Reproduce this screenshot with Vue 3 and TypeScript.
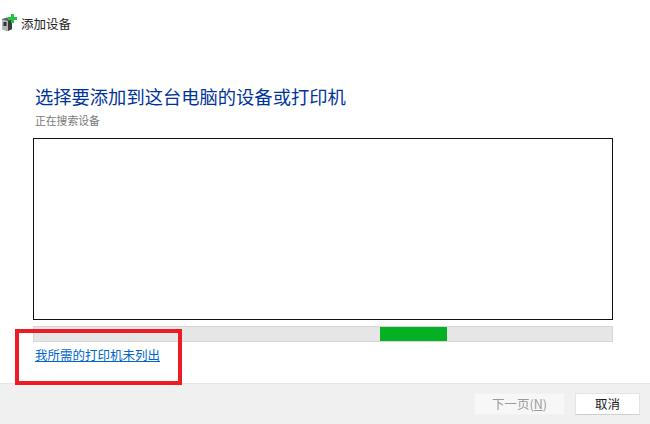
<script setup lang="ts">
const title = '选择要添加到这台电脑的设备或打印机'
</script>

<template>
  <div class="window">
    <header class="titlebar">
      <svg class="icon" width="17" height="18" viewBox="0 0 17 18">
        <path d="M1 5 L6 3.5 L11 5 V15 L6 17 L1 15Z" fill="#5f6664" />
        <path d="M1 5.5 L7 7 V17 L1 15Z" fill="#b4b9b6" />
        <path d="M7 7 L11 5.5 V15 L7 17Z" fill="#3a3f3e" />
        <rect x="2.5" y="8" width="3" height="4" fill="#2f3433" />
        <path d="M10 0 H13 V3 H16 V6 H13 V9 H10 V6 H7 V3 H10Z" fill="#1fc43c" />
      </svg>
      <span class="caption">添加设备</span>
    </header>

    <main class="content">
      <h1 class="heading">{{ title }}</h1>
      <p class="status">正在搜索设备</p>
      <div class="list"></div>
      <div class="progress"><div class="bar"></div></div>
      <a class="link" href="#">我所需的打印机未列出</a>
      <div class="highlight"></div>
    </main>

    <footer class="footer">
      <button class="btn disabled" disabled>下一页(<u>N</u>)</button>
      <button class="btn cancel">取消</button>
    </footer>
  </div>
</template>

<style scoped>
.window {
  width: 650px;
  height: 424px;
  display: flex;
  flex-direction: column;
  background: #fff;
  font-family: "Noto Sans CJK SC", "Liberation Sans", sans-serif;
  overflow: hidden;
}
.titlebar {
  height: 50px;
  display: flex;
  align-items: flex-start;
  padding: 14px 0 0 1px;
  gap: 3px;
  box-sizing: border-box;
}
.icon {
  flex: none;
}
.caption {
  font-size: 12.5px;
  line-height: 20px;
  color: #222;
}
.content {
  position: relative;
  flex: 1;
  padding: 0 37px 0 33px;
  display: flex;
  flex-direction: column;
}
.heading {
  margin: 33px 0 0 2px;
  font-size: 18.3px;
  line-height: 26px;
  font-weight: 400;
  color: #003399;
}
.status {
  margin: 3px 0 0 2px;
  font-size: 10.8px;
  line-height: 16px;
  color: #7a7a7a;
}
.list {
  margin-top: 10px;
  height: 182px;
  box-sizing: border-box;
  border: 1px solid #111;
  background: #fff;
}
.progress {
  margin-top: 6px;
  height: 16px;
  box-sizing: border-box;
  background: #e6e6e6;
  border: 1px solid #d6d6d6;
}
.bar {
  margin-left: 346px;
  width: 67px;
  height: 14px;
  background: #06b025;
}
.link {
  margin: 4px 0 0 2px;
  font-size: 12.5px;
  line-height: 18px;
  color: #0066cc;
  text-decoration: underline;
  align-self: flex-start;
}
.highlight {
  position: absolute;
  left: 15px;
  top: 279px;
  width: 167px;
  height: 56px;
  box-sizing: border-box;
  border: 4px solid #ed1c24;
}
.footer {
  height: 41px;
  flex: none;
  background: #f0f0f0;
  border-top: 1px solid #e6e6e6;
  box-sizing: border-box;
  display: flex;
  justify-content: flex-end;
  align-items: flex-start;
  padding: 9px 10px 0 0;
  gap: 10px;
}
.btn {
  height: 22px;
  padding: 0;
  font-family: inherit;
  font-size: 12.5px;
  line-height: 20px;
  border-radius: 1px;
  box-sizing: border-box;
}
.disabled {
  width: 91px;
  background: #f7f7f7;
  border: 1px solid #f2f2f2;
  color: #9a9a9a;
}
.cancel {
  width: 65px;
  background: #fff;
  border: 1px solid #e4e4e4;
  border-bottom-color: #cfcfcf;
  color: #1a1a1a;
}
</style>

<style>
html, body {
  margin: 0;
  background: #fff;
}
</style>
